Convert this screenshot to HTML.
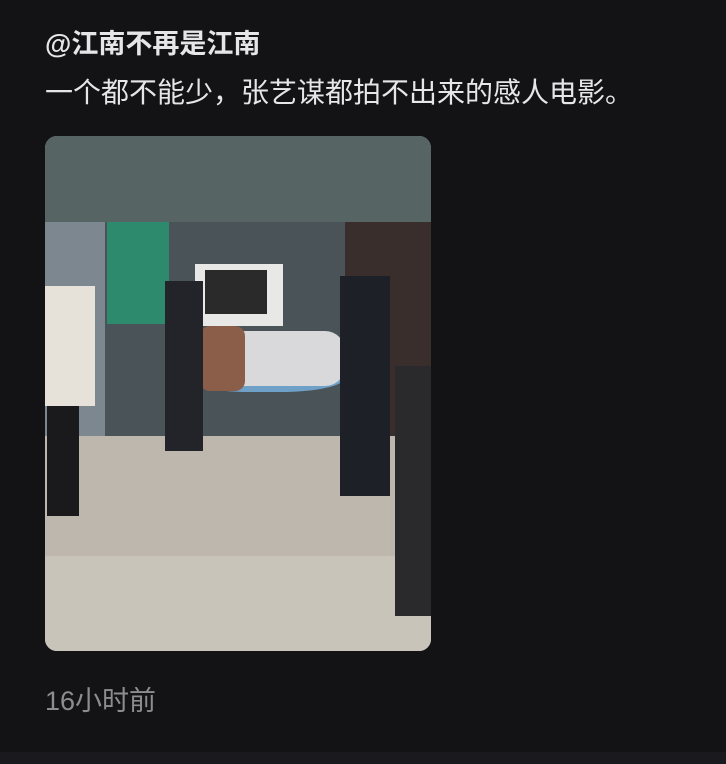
<!DOCTYPE html>
<html><head><meta charset="utf-8"><style>
html,body{margin:0;padding:0;}
body{width:726px;height:764px;background:#131316;position:relative;overflow:hidden;font-family:"Liberation Sans","Noto Sans CJK SC",sans-serif;}
.t1{position:absolute;left:45px;top:27px;font-size:27px;font-weight:bold;color:#e6e6e8;line-height:34px;}
.t2{position:absolute;left:45px;top:75px;font-size:28px;color:#e6e6e8;line-height:36px;white-space:nowrap;}
.ts{position:absolute;left:45px;top:684px;font-size:27px;color:#8d8d90;line-height:34px;}
.bot{position:absolute;left:0;top:752px;width:726px;height:12px;background:#1a1a1e;}
.ph{position:absolute;left:45px;top:136px;width:386px;height:515px;border-radius:12px;overflow:hidden;background:#b9b4aa;}
.ph div{position:absolute;}
</style></head><body>
<div class="t1">@江南不再是江南</div>
<div class="t2">一个都不能少，张艺谋都拍不出来的感人电影。</div>
<div class="ph">
<div style="left:0;top:0;width:386px;height:86px;background:#566564"></div>
<div style="left:0;top:86px;width:386px;height:220px;background:#7d8790"></div>
<div style="left:60px;top:86px;width:326px;height:230px;background:#4a5358"></div>
<div style="left:300px;top:86px;width:86px;height:250px;background:#3a2e2c"></div>
<div style="left:62px;top:86px;width:62px;height:102px;background:#2e8a6c"></div>
<div style="left:150px;top:128px;width:88px;height:62px;background:#e8e8e6"></div>
<div style="left:160px;top:134px;width:62px;height:44px;background:#2a2a2a"></div>
<div style="left:0;top:300px;width:386px;height:215px;background:#bdb7ad"></div>
<div style="left:0;top:420px;width:386px;height:95px;background:#c9c4b9"></div>
<div style="left:140px;top:220px;width:160px;height:36px;border-radius:40%;background:#6fa0c8"></div>
<div style="left:150px;top:195px;width:150px;height:55px;background:#d9d8da;border-radius:20px"></div>
<div style="left:155px;top:190px;width:45px;height:65px;background:#8b5e4a;border-radius:10px"></div>
<div style="left:120px;top:145px;width:38px;height:170px;background:#22242a"></div>
<div style="left:295px;top:140px;width:50px;height:220px;background:#1e2028"></div>
<div style="left:0;top:150px;width:50px;height:120px;background:#e6e2da"></div>
<div style="left:2px;top:270px;width:32px;height:110px;background:#1a1a1c"></div>
<div style="left:350px;top:230px;width:36px;height:250px;background:#2a2a2c"></div>
</div>
<div class="ts">16小时前</div>
<div class="bot"></div>
</body></html>
